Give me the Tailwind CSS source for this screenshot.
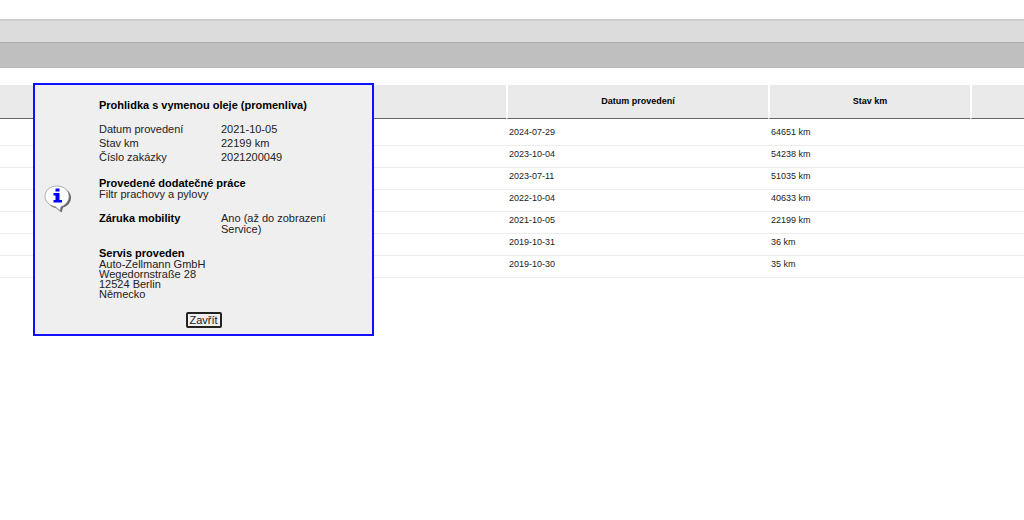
<!DOCTYPE html>
<html lang="cs">
<head>
    <meta charset="UTF-8">
    <meta name="viewport" content="width=device-width, initial-scale=1.0">
    <title>Servisní historie</title>
    <script src="https://cdn.jsdelivr.net/npm/@tailwindcss/browser@4"></script>
</head>
<body class="bg-white font-['Liberation_Sans',Arial,sans-serif] text-[#222]">
    <!-- Toolbars -->
    <header class="pt-[19px]">
        <div class="h-[23px] bg-[#dcdcdc] border-t-2 border-[#cfcfcf]"></div>
        <div class="h-[26px] bg-[#bfbfbf] border-y border-t-[#adadad] border-b-[#b8b8b8]"></div>
    </header>

    <!-- Service history -->
    <main class="pt-[17px]">
        <table class="w-full table-fixed border-separate border-spacing-0 text-[9px] leading-3">
            <colgroup>
                <col>
                <col class="w-[262px]">
                <col class="w-[202px]">
                <col class="w-[54px]">
            </colgroup>
            <thead>
                <tr class="h-[34px] text-black *:bg-[#eaeaea] *:border-b *:border-b-[#666] *:pb-[2px] *:not-first:border-l-2 *:not-first:border-l-white">
                    <th></th>
                    <th>Datum provedení</th>
                    <th>Stav km</th>
                    <th></th>
                </tr>
            </thead>
            <tbody class="**:[td]:border-b **:[td]:border-b-[#ececec] **:[td]:pt-[2px] **:[td]:pb-[7px] **:[td]:pl-[3px]">
                <tr>
                    <td class="h-[27px]"></td>
                    <td class="align-bottom">2024-07-29</td>
                    <td class="align-bottom">64651 km</td>
                    <td></td>
                </tr>
                <tr>
                    <td></td>
                    <td>2023-10-04</td>
                    <td>54238 km</td>
                    <td></td>
                </tr>
                <tr>
                    <td></td>
                    <td>2023-07-11</td>
                    <td>51035 km</td>
                    <td></td>
                </tr>
                <tr>
                    <td></td>
                    <td>2022-10-04</td>
                    <td>40633 km</td>
                    <td></td>
                </tr>
                <tr>
                    <td></td>
                    <td>2021-10-05</td>
                    <td>22199 km</td>
                    <td></td>
                </tr>
                <tr>
                    <td></td>
                    <td>2019-10-31</td>
                    <td>36 km</td>
                    <td></td>
                </tr>
                <tr>
                    <td></td>
                    <td>2019-10-30</td>
                    <td>35 km</td>
                    <td></td>
                </tr>
            </tbody>
        </table>
    </main>

    <!-- Service detail popup -->
    <div role="dialog" aria-labelledby="detailTitle" class="absolute left-[33px] top-[83px] w-[341px] border-2 border-[#1010ff] bg-[#efefef] pt-[14px] pb-[6px] text-[11px]">
        <div class="flex items-center">
            <div class="w-16 shrink-0 pl-[9px]">
                <svg class="w-7 h-7" viewBox="0 0 28 28" aria-hidden="true">
                    <path d="M15 3C22 3 27 7 27 12.500C27 18 23 21.500 19 22.500L17.500 27.500L12 23C6 22 4 18 4 13C4 7 8 3 15 3Z" fill="#666"/>
                    <path d="M13 1C20 1 25 5.500 25 11.500C25 16.500 21 20.500 17 21.500L16 25.500L11 21.500C5 20.500 1 16.500 1 11.500C1 5.500 6 1 13 1Z" fill="#fff" stroke="#999" stroke-width=".8"/>
                    <path d="M11.500 3.500h4v3h-4zM9.500 8h6v7h2.500v2.500h-8.500v-2.500h2v-4.500h-2z" fill="#00f"/>
                </svg>
            </div>
            <div class="grow">
                <h1 id="detailTitle" class="font-bold leading-3 text-black">Prohlidka s vymenou oleje (promenliva)</h1>
                <dl class="mt-[11px] grid grid-cols-[122px_1fr] leading-[14px]">
                    <dt>Datum provedení</dt>
                    <dd>2021-10-05</dd>
                    <dt>Stav km</dt>
                    <dd>22199 km</dd>
                    <dt>Číslo zakázky</dt>
                    <dd>2021200049</dd>
                </dl>
                <h2 class="mt-[14px] font-bold leading-[11px] text-black">Provedené dodatečné práce</h2>
                <p class="leading-[11px]">Filtr prachovy a pylovy</p>
                <dl class="mt-[13px] grid grid-cols-[122px_1fr] leading-[11px]">
                    <dt class="font-bold text-black">Záruka mobility</dt>
                    <dd class="pr-10">Ano (až do zobrazení Service)</dd>
                </dl>
                <h2 class="mt-[13px] font-bold leading-[11px] text-black">Servis proveden</h2>
                <address class="not-italic leading-[10px]">
                    Auto-Zellmann GmbH<br>
                    Wegedornstraße 28<br>
                    12524 Berlin<br>
                    Německo
                </address>
            </div>
        </div>
        <div class="mt-[13px] flex justify-center">
            <button type="button" class="h-4 w-9 rounded-[2px] border-2 border-[#222] bg-[#efefef] leading-3">Zavřít</button>
        </div>
    </div>
</body>
</html>
